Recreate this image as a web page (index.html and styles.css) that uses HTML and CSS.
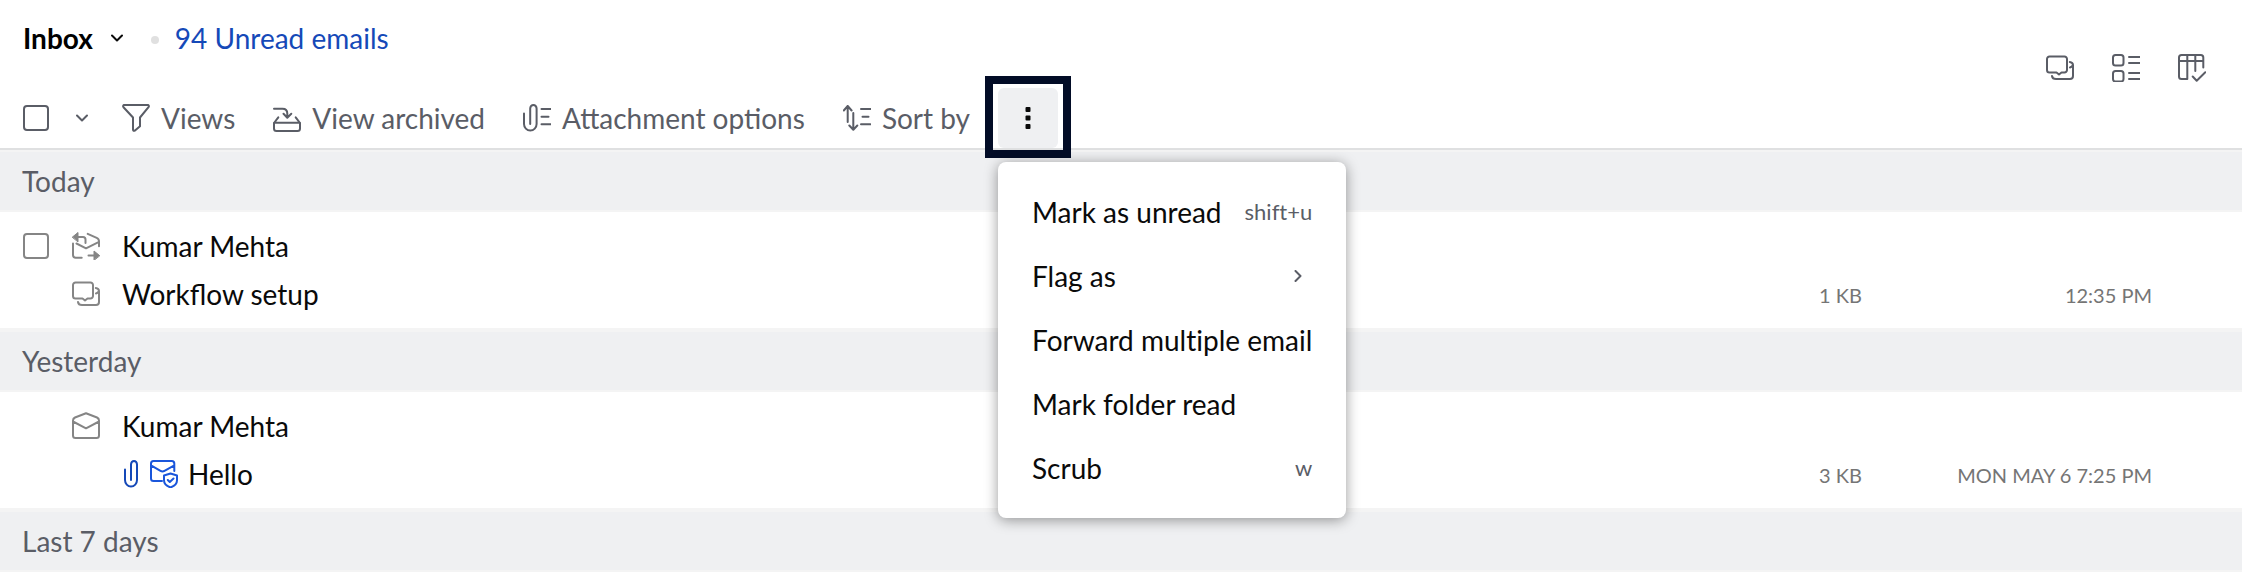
FILE: index.html
```html
<!DOCTYPE html>
<html lang="en">
<head>
    <meta charset="UTF-8">
    <meta name="viewport" content="width=device-width, initial-scale=1.0">
    <title>Inbox</title>
    <link rel="stylesheet" href="styles.css">
</head>
<body>
    <svg class="sprite" aria-hidden="true">
        <symbol id="chevron-down" viewBox="0 0 12 12"><path d="M1 3.5l5 5 5-5"/></symbol>
        <symbol id="chevron-right" viewBox="0 0 12 12"><path d="M3.5 1l5 5-5 5"/></symbol>
        <symbol id="clip" viewBox="0 0 14 28"><path d="M1 9.5V20a6 6.5 0 0 0 12 0V4.500a3 3.500 0 0 0-6 0V20"/></symbol>
        <symbol id="chat" viewBox="0 0 28 28">
            <path d="M3.500 2.500h15a2.500 2.500 0 0 1 2.500 2.500v11a2.500 2.500 0 0 1-2.500 2.500h-3l-2.500 2-2.500-2h-7A2.500 2.500 0 0 1 1 16V5a2.500 2.500 0 0 1 2.500-2.500z"/>
            <path d="M23.800 8q3 .3 3.200 3v11q0 3-3 3H10q-3.500 0-4-3M24 13.500q2-.5 3-2.500"/>
        </symbol>
    </svg>

    <header class="header">
        <div class="header-main">
            <div class="title-row">
                <h1>Inbox</h1>
                <button class="arrow" aria-label="Folders"><svg class="chevron"><use href="#chevron-down"/></svg></button>
                <span class="dot"></span>
                <a href="#" class="unread">94 Unread emails</a>
            </div>

            <div class="toolbar">
                <div class="select-all">
                    <input type="checkbox" class="check" aria-label="Select all">
                    <button class="arrow" aria-label="Selection options"><svg class="chevron"><use href="#chevron-down"/></svg></button>
                </div>
                <button class="tool">
                    <svg class="icon" viewBox="0 0 28 28"><path d="M2 1h24q1.500.8.500 2.200L18 13.500v8.700L13 26.500q-2 1-2-1v-12L1.500 3.200Q.5 1.800 2 1z"/></svg>
                    Views
                </button>
                <button class="tool">
                    <svg class="icon" viewBox="0 0 28 28">
                        <path d="M1 4.700h8.500q4.800 0 4.800 4.800v4M10.500 9.800l3.800 3.900 4-3.900"/>
                        <path d="M5.300 13.300L1 19v5.500Q1 27 3.500 27h21q2.500 0 2.500-2.500V19l-4.300-5.700M1 18.700h26"/>
                    </svg>
                    View archived
                </button>
                <button class="tool">
                    <svg class="icon" viewBox="0 0 28 28">
                        <path d="M1 9.500V20a6.300 6.500 0 0 0 12.600 0V4.500a3.200 3.500 0 0 0-6.400 0V20"/>
                        <path d="M18.500 5H28M18.500 12.700H25.500M18.500 20.300H28"/>
                    </svg>
                    Attachment options
                </button>
                <button class="tool">
                    <svg class="icon" viewBox="0 0 28 28">
                        <path d="M4.700 18V2M.8 6.500L4.700 2l3.900 4.500M10.300 9v16.500M6.300 21.500l4 4.200 4-4.200"/>
                        <path d="M18 5h9.500M19.500 12.700h6M18 20.300h9.500"/>
                    </svg>
                    Sort by
                </button>
                <div class="more">
                    <button class="more-button" aria-label="More actions" aria-expanded="true">
                        <svg class="icon" viewBox="0 0 28 28">
                            <rect x="11.500" y="3" width="5" height="5" rx="1"/>
                            <rect x="11.500" y="11.500" width="5" height="5" rx="1"/>
                            <rect x="11.500" y="20" width="5" height="5" rx="1"/>
                        </svg>
                    </button>
                    <div class="menu" role="menu">
                        <button class="menu-item" role="menuitem">Mark as unread <kbd>shift+u</kbd></button>
                        <button class="menu-item" role="menuitem">Flag as <svg class="chevron submenu"><use href="#chevron-right"/></svg></button>
                        <button class="menu-item" role="menuitem">Forward multiple email</button>
                        <button class="menu-item" role="menuitem">Mark folder read</button>
                        <button class="menu-item" role="menuitem">Scrub <kbd>w</kbd></button>
                    </div>
                </div>
            </div>
        </div>

        <nav class="layout-tools">
            <button aria-label="Conversations"><svg class="icon"><use href="#chat"/></svg></button>
            <button aria-label="List view">
                <svg class="icon" viewBox="0 0 28 28">
                    <rect x="1" y="1" width="10.500" height="10.500" rx="2.500"/>
                    <rect x="1" y="17" width="10.500" height="10.500" rx="2.500"/>
                    <path d="M17 3h10.500M17 9h10.500M17 19h10.500M17 25h10.500"/>
                </svg>
            </button>
            <button aria-label="Columns">
                <svg class="icon" viewBox="0 0 28 28">
                    <path d="M9.300 25H3.500Q1 25 1 22.500v-19Q1 1 3.500 1h19.300q2.500 0 2.500 2.500v10M1 7h24.300M9.300 1v24M17.300 1v16"/>
                    <path d="M14.700 22.500l4 4.200 8.600-8.400"/>
                </svg>
            </button>
        </nav>
    </header>

    <main>
        <h2 class="group">Today</h2>
        <article class="mail">
            <input type="checkbox" class="check" aria-label="Select Workflow setup">
            <svg class="icon state" viewBox="0 0 28 28">
                <path d="M5 5h6q2.500 0 2.500 2.500V11M4.500 11.500l9.500 4.800 13-6.500M15.700 1.800l9 4q2.300 1 2.300 3.500v5M1 11.500v11.500q0 2.700 2.700 2.700h6M16.500 23.500H23"/>
                <path class="solid" d="M.5 5L6 .5v9zM27.500 23.500L22 19v9z"/>
            </svg>
            <span class="sender">Kumar Mehta</span>
            <svg class="icon state thread"><use href="#chat"/></svg>
            <span class="subject">Workflow setup</span>
            <span class="size">1 KB</span>
            <time class="time">12:35 PM</time>
        </article>

        <h2 class="group next">Yesterday</h2>
        <article class="mail">
            <svg class="icon state" viewBox="0 0 28 28">
                <path d="M14 1.300L25 5.500q2 1 2 3v15Q27 26 24.500 26h-21Q1 26 1 23.500v-15q0-2 2-3zM1 9.500l13 6.800 13-6.800"/>
            </svg>
            <span class="sender">Kumar Mehta</span>
            <span class="subject">
                <svg class="icon clip"><use href="#clip"/></svg>
                <svg class="icon secure" viewBox="0 0 28 28">
                    <path d="M12 21H3.500Q1 21 1 18.500v-15Q1 1 3.500 1h18.300q2.500 0 2.500 2.500V11M1 5.300l9.500 5.500q2 1.200 4 0l9.800-5.500"/>
                    <path d="M20.500 13.500l6.500 2v4.700q0 4.800-6.500 7.300-6.500-2.500-6.500-7.300v-4.700zM17.800 20l2 2 3.700-3.500"/>
                </svg>
                Hello
            </span>
            <span class="size">3 KB</span>
            <time class="time">MON MAY 6 7:25 PM</time>
        </article>

        <h2 class="group next">Last 7 days</h2>
    </main>
</body>
</html>
```
FILE: styles.css
```css
* {
    box-sizing: border-box;
}

body {
    margin: 0;
    font-family: Lato, "Liberation Sans", sans-serif;
    font-size: 28px;
    line-height: 48px;
    color: #0a0a0a;
    background-color: #fff;
}

button {
    display: flex;
    align-items: center;
    padding: 0;
    border: none;
    background: none;
    font: inherit;
    color: inherit;
    white-space: nowrap;
    cursor: pointer;
}

h1, h2 {
    margin: 0;
    font-size: 28px;
}

.sprite {
    position: absolute;
    width: 0;
    height: 0;
}

/* Icons */
.icon, .chevron {
    display: block;
    flex: none;
    fill: none;
    stroke: currentColor;
    stroke-width: 2;
    stroke-linecap: round;
    stroke-linejoin: round;
}

.icon {
    width: 28px;
    height: 28px;
}

.chevron {
    width: 12px;
    height: 12px;
}

.solid {
    fill: currentColor;
    stroke-width: 1;
}

/* Header */
.header {
    display: flex;
    justify-content: space-between;
    align-items: center;
    padding: 0 36px 0 23px;
    border-bottom: 2px solid #dfe0e1;
}

.title-row {
    display: flex;
    align-items: center;
    height: 76px;
    margin-bottom: 12px;
}

.title-row h1 {
    color: #000;
}

.title-row .arrow {
    margin-left: 18px;
}

.dot {
    width: 8px;
    height: 8px;
    margin: 4px 16px 0 28px;
    border-radius: 50%;
    background-color: #e0e0e0;
}

.unread {
    color: #1549b8;
    text-decoration: none;
}

.toolbar {
    display: flex;
    align-items: center;
    gap: 18px;
    height: 60px;
    color: #5a5d66;
}

.select-all {
    display: flex;
    align-items: center;
    gap: 27px;
    padding-right: 6px;
}

.check {
    appearance: none;
    width: 26px;
    height: 26px;
    margin: 0;
    border: 2px solid #5a5d66;
    border-radius: 4px;
    background-color: #fff;
}

.tool {
    gap: 11px;
    padding: 0 10px;
}

.layout-tools {
    display: flex;
    gap: 38px;
    padding-bottom: 12px;
    color: #5a5d66;
}

/* More actions */
.more {
    position: relative;
}

.more::after {
    content: "";
    position: absolute;
    inset: -12px -13px -10px;
    border: 8px solid #020c26;
    pointer-events: none;
}

.more-button {
    justify-content: center;
    width: 60px;
    height: 60px;
    border-radius: 6px;
    background-color: #eff0f2;
    color: #0a0a0a;
}

.more-button .icon {
    fill: currentColor;
    stroke: none;
}

.menu {
    position: absolute;
    top: 74px;
    left: 0;
    z-index: 10;
    padding: 18px 0;
    border-radius: 8px;
    background-color: #fff;
    color: #0a0a0a;
    box-shadow: 0 2px 14px rgba(0, 0, 0, 0.4);
}

.menu-item {
    justify-content: space-between;
    gap: 23px;
    width: 100%;
    height: 64px;
    padding: 0 34px;
    font-variant-ligatures: none;
}

.menu-item kbd {
    font-family: inherit;
    font-size: 22px;
    color: #5a5d66;
}

.submenu {
    margin-right: 8px;
    color: #5a5d66;
}

/* Mail list */
.group {
    height: 62px;
    padding: 0 22px;
    border: 2px solid #f4f4f4;
    border-width: 2px 0;
    background-color: #eff0f2;
    font-weight: normal;
    line-height: 58px;
    color: #5a5d66;
}

.group.next {
    height: 64px;
    border-top-width: 4px;
}

.mail {
    display: grid;
    grid-template-columns: 49px 50px 1fr 200px 290px;
    grid-auto-rows: 48px;
    align-items: center;
    padding: 10px 90px 10px 23px;
}

.mail .check {
    border-color: #858585;
}

.state {
    grid-column: 2;
    color: #858585;
}

.sender {
    grid-column: 3;
}

.thread {
    grid-row: 2;
}

.subject {
    display: flex;
    align-items: center;
    grid-column: 3;
    grid-row: 2;
}

.clip {
    width: 14px;
    margin: 0 12px 0 2px;
    color: #1549b8;
}

.secure {
    margin-right: 10px;
    color: #1a56db;
}

.size, .time {
    grid-row: 2;
    padding-top: 2px;
    font-size: 20px;
    text-align: right;
    color: #757575;
}

.size {
    grid-column: 4;
}

.time {
    grid-column: 5;
}
```
